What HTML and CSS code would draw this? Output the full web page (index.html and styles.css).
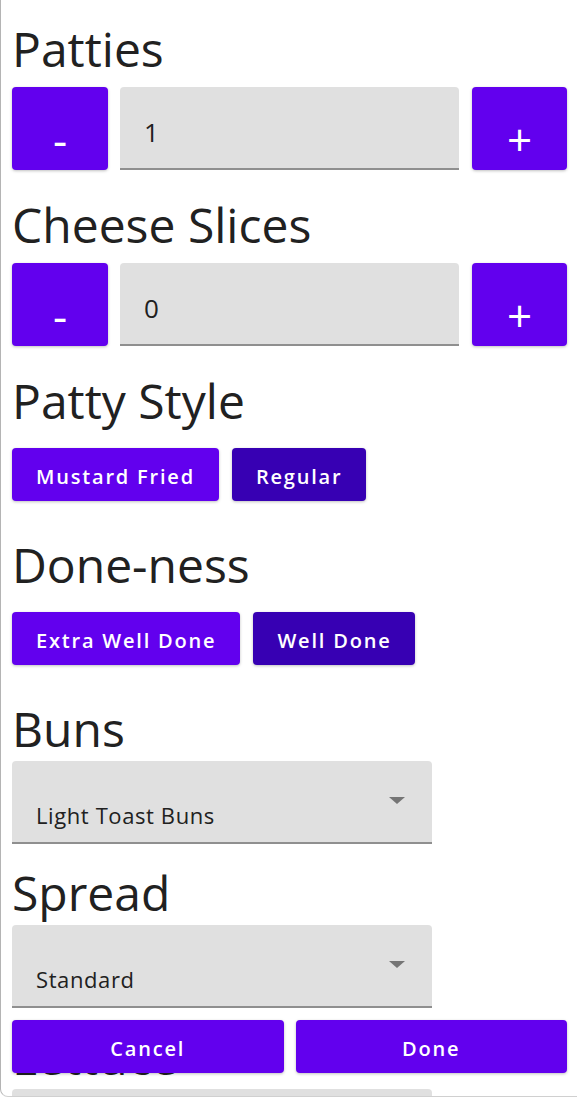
FILE: index.html
```html
<!DOCTYPE html>
<html>
<head>
<meta charset="utf-8">
<link rel="stylesheet" href="styles.css">
</head>
<body>
<div class="window">
  <div class="content">
    <div class="heading">Patties</div>
    <div class="stepper">
      <div class="step-btn"><span class="minus">-</span></div>
      <div class="entry">1</div>
      <div class="step-btn"><span class="plus">+</span></div>
    </div>

    <div class="heading">Cheese Slices</div>
    <div class="stepper">
      <div class="step-btn"><span class="minus">-</span></div>
      <div class="entry">0</div>
      <div class="step-btn"><span class="plus">+</span></div>
    </div>

    <div class="heading">Patty Style</div>
    <div class="choices">
      <div class="btn">Mustard Fried</div>
      <div class="btn selected">Regular</div>
    </div>

    <div class="heading">Done-ness</div>
    <div class="choices">
      <div class="btn">Extra Well Done</div>
      <div class="btn selected">Well Done</div>
    </div>

    <div class="heading">Buns</div>
    <div class="picker">
      <span class="picker-text">Light Toast Buns</span>
      <span class="arrow"></span>
    </div>

    <div class="heading">Spread</div>
    <div class="picker">
      <span class="picker-text">Standard</span>
      <span class="arrow"></span>
    </div>

    <div class="heading">Lettuce</div>
    <div class="picker">
      <span class="picker-text">Standard</span>
      <span class="arrow"></span>
    </div>
  </div>

  <div class="footer">
    <div class="btn wide">Cancel</div>
    <div class="btn wide">Done</div>
  </div>
</div>
</body>
</html>
```

FILE: styles.css
```css
* { box-sizing: border-box; }

html, body {
  margin: 0;
  padding: 0;
  background: #ffffff;
}

body {
  font-family: "Open Sans", "Noto Sans", sans-serif;
  color: #212121;
  width: 577px;
  height: 1099px;
  overflow: hidden;
}

.window {
  position: relative;
  height: 1097px;
  border-left: 1px solid #b4b4b4;
  border-bottom: 1px solid #d0d0d0;
  border-bottom-left-radius: 8px;
  overflow: hidden;
}

.content {
  display: flex;
  flex-direction: column;
  align-items: flex-start;
  padding: 19px 10px 0 11px;
}

.heading {
  font-size: 48px;
  line-height: 60px;
  height: 60px;
  font-weight: 400;
  color: #212121;
  white-space: nowrap;
}

.stepper {
  display: flex;
  gap: 12px;
  width: 555px;
  height: 83px;
  margin-top: 8px;
  margin-bottom: 25px;
}

.step-btn {
  width: 96px;
  flex: none;
  background: #6200ee;
  border-radius: 4px;
  box-shadow: 0 1px 3px rgba(0,0,0,0.25);
  color: #ffffff;
  display: flex;
  justify-content: center;
  align-items: center;
  padding-top: 20px;
}

.step-btn:last-child {
  margin-left: 1px;
  width: 95px;
}

.minus, .plus {
  font-size: 44px;
  line-height: 1;
  font-weight: 400;
}

.entry {
  flex: 1;
  background: #e0e0e0;
  border-radius: 4px 4px 0 0;
  border-bottom: 2px solid #8f8f8f;
  font-size: 26px;
  line-height: 1;
  padding: 32px 0 0 24px;
  color: #212121;
}

.choices {
  display: flex;
  gap: 13px;
  margin-top: 17px;
  margin-bottom: 34px;
}

.btn {
  height: 53px;
  background: #6200ee;
  color: #ffffff;
  border-radius: 4px;
  box-shadow: 0 1px 3px rgba(0,0,0,0.25);
  font-size: 20px;
  font-weight: 600;
  letter-spacing: 1.8px;
  display: flex;
  align-items: center;
  justify-content: center;
  padding: 3px 24px 0 24px;
  white-space: nowrap;
}

.btn.selected {
  background: #3700b3;
}

.picker {
  position: relative;
  width: 420px;
  height: 83px;
  margin-top: 2px;
  margin-bottom: 19px;
  background: #e0e0e0;
  border-radius: 4px 4px 0 0;
  border-bottom: 2px solid #8f8f8f;
  display: flex;
  align-items: flex-end;
  justify-content: space-between;
  padding: 0 27px 12px 24px;
}

.picker-text {
  font-size: 22px;
  letter-spacing: 0.6px;
  line-height: 30px;
  color: #212121;
}

.arrow {
  width: 0;
  height: 0;
  border-left: 8px solid transparent;
  border-right: 8px solid transparent;
  border-top: 7px solid #757575;
  align-self: flex-start;
  margin-top: 36px;
}

.footer {
  position: absolute;
  left: 11px;
  right: 10px;
  top: 1020px;
  display: grid;
  grid-template-columns: 1fr 1fr;
  gap: 12px;
}

.btn.wide {
  padding: 3px 0 0 0;
}
```
